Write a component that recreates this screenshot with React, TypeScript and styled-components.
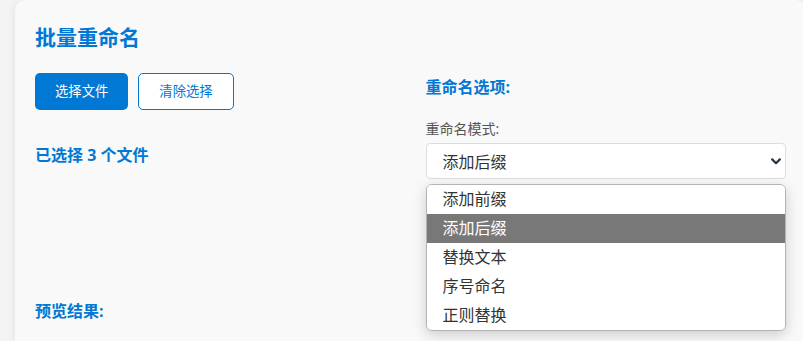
import styled, { createGlobalStyle } from 'styled-components';

const BLUE = '#0078d4';

const GlobalStyle = createGlobalStyle`
  html, body {
    margin: 0;
    padding: 0;
    background: #f4f4f4;
    overflow: hidden;
  }
  body {
    font-family: "Open Sans", "Noto Sans CJK SC", sans-serif;
    color: #333;
  }
`;

const Page = styled.div`
  width: 803px;
  height: 341px;
  overflow: hidden;
  padding-left: 15px;
  box-sizing: border-box;
`;

const Card = styled.div`
  width: 791px;
  min-height: 400px;
  box-sizing: border-box;
  background: #f9f9f9;
  border-radius: 10px;
  box-shadow: 0 0 10px rgba(0, 0, 0, 0.08);
  padding: 23px 20px 20px;
`;

const Title = styled.h2`
  margin: 0 0 22px;
  font-size: 21px;
  line-height: 28px;
  font-weight: 700;
  color: ${BLUE};
`;

const Columns = styled.div`
  display: grid;
  grid-template-columns: 1fr 1fr;
  column-gap: 30px;
`;

const Column = styled.div<{ $top?: number }>`
  display: flex;
  flex-direction: column;
  padding-top: ${(p) => p.$top ?? 0}px;
`;

const ButtonRow = styled.div`
  display: flex;
  gap: 10px;
`;

const Button = styled.button<{ $outline?: boolean }>`
  font-family: "Open Sans", "Noto Sans CJK SC", sans-serif;
  font-size: 13.333px;
  line-height: 17px;
  height: 37.3px;
  padding: 0 20px;
  border-radius: 5px;
  border: ${(p) => (p.$outline ? `1px solid ${BLUE}` : 'none')};
  background: ${(p) => (p.$outline ? '#fff' : BLUE)};
  color: ${(p) => (p.$outline ? BLUE : '#fff')};
  cursor: pointer;
`;

const SectionHeading = styled.h3<{ $mt?: number }>`
  margin: ${(p) => p.$mt ?? 0}px 0 0;
  font-size: 16px;
  line-height: 22px;
  font-weight: 700;
  color: ${BLUE};
`;

const FieldLabel = styled.label<{ $mt?: number }>`
  display: block;
  margin-top: ${(p) => p.$mt ?? 0}px;
  font-size: 14px;
  line-height: 20px;
  color: #555;
`;

const SelectWrap = styled.div`
  position: relative;
  margin-top: 4px;
`;

const SelectBox = styled.div`
  height: 36px;
  box-sizing: border-box;
  display: flex;
  align-items: center;
  justify-content: space-between;
  padding: 0 4px 0 16px;
  background: #fff;
  border: 1px solid #ddd;
  border-radius: 4px;
  font-size: 16px;
  color: #333;
`;

const OptionList = styled.ul`
  position: absolute;
  left: 0;
  right: 0;
  top: 41px;
  margin: 0;
  padding: 0;
  list-style: none;
  background: #fff;
  border: 1px solid #b4b4b4;
  border-radius: 6px;
  overflow: hidden;
  box-shadow: 0 4px 14px rgba(0, 0, 0, 0.18);
  z-index: 2;
`;

const Option = styled.li<{ $active?: boolean }>`
  height: 29px;
  line-height: 29px;
  padding-left: 16px;
  font-size: 16px;
  background: ${(p) => (p.$active ? '#787878' : '#fff')};
  color: ${(p) => (p.$active ? '#fff' : '#333')};
`;

const modes = ['添加前缀', '添加后缀', '替换文本', '序号命名', '正则替换'];

function Chevron() {
  return (
    <svg width="10" height="7" viewBox="0 0 10 7" fill="none">
      <polyline
        points="1.2,1.4 5,5.2 8.8,1.4"
        stroke="#2b3445"
        strokeWidth="2.2"
        strokeLinecap="round"
        strokeLinejoin="round"
      />
    </svg>
  );
}

export default function App() {
  const selected = '添加后缀';
  return (
    <>
      <GlobalStyle />
      <Page>
        <Card>
          <Title>批量重命名</Title>
          <Columns>
            <Column>
              <ButtonRow>
                <Button>选择文件</Button>
                <Button $outline>清除选择</Button>
              </ButtonRow>
              <SectionHeading $mt={34}>已选择 3 个文件</SectionHeading>
            </Column>
            <Column $top={3}>
              <SectionHeading>重命名选项:</SectionHeading>
              <FieldLabel $mt={21}>重命名模式:</FieldLabel>
              <SelectWrap>
                <SelectBox>
                  <span>{selected}</span>
                  <Chevron />
                </SelectBox>
                <OptionList>
                  {modes.map((m) => (
                    <Option key={m} $active={m === selected}>
                      {m}
                    </Option>
                  ))}
                </OptionList>
              </SelectWrap>
            </Column>
          </Columns>
          <SectionHeading $mt={121}>预览结果:</SectionHeading>
        </Card>
      </Page>
    </>
  );
}
